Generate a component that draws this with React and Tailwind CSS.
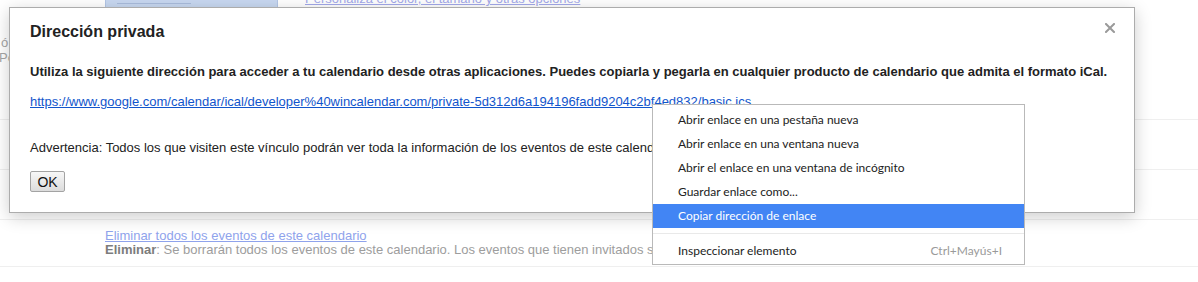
import React from "react";

const arial = { fontFamily: '"Liberation Sans", Arial, sans-serif' };

function MenuItem({ label, shortcut, active }) {
  return (
    <div
      className={`flex h-[24px] items-center justify-between pl-[25px] pr-[22px] ${
        active ? "bg-[#4285f4] text-white" : "text-[#222]"
      }`}
    >
      <span>{label}</span>
      {shortcut && <span className="text-[#9a9a9a]">{shortcut}</span>}
    </div>
  );
}

export default function App() {
  return (
    <div
      className="relative h-[282px] w-[1198px] overflow-hidden bg-white text-[13px]"
      style={arial}
    >
      {/* Background page (faded behind overlay) */}
      <div className="flex flex-col">
        <div className="relative h-[120px] border-b border-[#efefef]">
          <div className="flex items-start">
            <div className="ml-[105px] flex h-[7px] w-[173px] items-start border-x border-[#b3c6e6] bg-[#c8d8f1]">
              <div className="ml-[11px] mt-[3px] h-[1px] w-[74px] bg-[#a9bcdc]" />
            </div>
            <span className="-mt-[8px] ml-[27px] leading-[14px] text-[#a3a9ea] underline">
              Personaliza el color, el tamaño y otras opciones
            </span>
          </div>
          <div className="mt-[28px] flex flex-col leading-[15px] text-[#a5a5a5]">
            <span className="ml-[1px]">ó</span>
            <span className="-ml-[1px]">Pe</span>
          </div>
        </div>
        <div className="h-[50px] border-b border-[#efefef]" />
        <div className="h-[50px] border-b border-[#efefef]" />
        <div className="h-[47px] border-b border-[#efefef] pl-[105px] pt-[9px] leading-[14px]">
          <div className="text-[#8fa3ec] underline">
            Eliminar todos los eventos de este calendario
          </div>
          <div className="whitespace-nowrap text-[#9d9d9d]">
            <span className="font-bold text-[#7c7c7c]">Eliminar</span>: Se
            borrarán todos los eventos de este calendario. Los eventos que
            tienen invitados se eliminarán.
          </div>
        </div>
      </div>

      {/* Dialog */}
      <div className="absolute left-[9px] top-[7px] flex h-[206px] w-[1126px] flex-col border border-[#acacac] bg-white pl-[20px] pr-[19px] text-[#222] shadow-[0_4px_16px_rgba(0,0,0,0.2)]">
        <div className="flex items-start justify-between pt-[14px]">
          <div className="text-[16px] font-bold leading-[20px]">
            Dirección privada
          </div>
          <svg
            width="10"
            height="10"
            viewBox="0 0 10 10"
            className="mt-[1px]"
          >
            <path
              d="M1 1 L9 9 M9 1 L1 9"
              stroke="#9a9a9a"
              strokeWidth="2"
              strokeLinecap="square"
            />
          </svg>
        </div>
        <div className="mt-[22px] whitespace-nowrap font-bold leading-[16px]">
          Utiliza la siguiente dirección para acceder a tu calendario desde
          otras aplicaciones. Puedes copiarla y pegarla en cualquier producto de
          calendario que admita el formato iCal.
        </div>
        <div className="mt-[14px] whitespace-nowrap leading-[16px]">
          <a className="text-[#1155cc] underline">
            https://www.google.com/calendar/ical/developer%40wincalendar.com/private-5d312d6a194196fadd9204c2bf4ed832/basic.ics
          </a>
        </div>
        <div className="mt-[30px] whitespace-nowrap leading-[16px]">
          Advertencia: Todos los que visiten este vínculo podrán ver toda la
          información de los eventos de este calendario.
        </div>
        <div className="mt-[15px]">
          <button className="flex h-[21px] w-[35px] items-center justify-center rounded-[2px] border border-[#a3a3a3] bg-gradient-to-b from-[#f7f7f7] to-[#dcdcdc] text-[14px] leading-none text-[#111]">
            OK
          </button>
        </div>
      </div>

      {/* Context menu */}
      <div
        className="absolute left-[652px] top-[104px] flex w-[373px] flex-col border border-[#b9b9b9] bg-white pb-[1px] pt-[3px] text-[12px]"
        style={{ fontFamily: "Lato, 'Noto Sans', sans-serif" }}
      >
        <MenuItem label="Abrir enlace en una pestaña nueva" />
        <MenuItem label="Abrir enlace en una ventana nueva" />
        <MenuItem label="Abrir el enlace en una ventana de incógnito" />
        <MenuItem label="Guardar enlace como..." />
        <MenuItem label="Copiar dirección de enlace" active />
        <div className="my-[5px] h-[1px] bg-[#e9e9e9]" />
        <MenuItem label="Inspeccionar elemento" shortcut="Ctrl+Mayús+I" />
      </div>
    </div>
  );
}
